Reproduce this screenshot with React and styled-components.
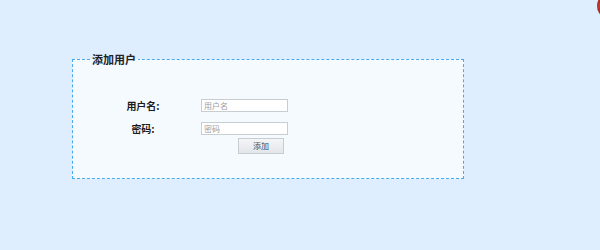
import React from "react";
import styled, { createGlobalStyle } from "styled-components";

const Global = createGlobalStyle`
  html, body { margin: 0; padding: 0; }
  body {
    background: #deeefe;
    width: 600px;
    height: 250px;
    overflow: hidden;
    font-family: "Noto Sans CJK SC", "Noto Sans", sans-serif;
  }
`;

const Page = styled.div`
  position: relative;
  width: 600px;
  height: 250px;
  padding-top: 53px;
  box-sizing: border-box;
`;

const Corner = styled.div`
  position: absolute;
  top: -4px;
  right: -11px;
  width: 14px;
  height: 20px;
  border-radius: 50%;
  background: radial-gradient(circle at 20% 50%, #c23a2e 0%, #a02a20 45%, #6a6a6a 65%);
`;

const Fieldset = styled.fieldset`
  margin: 0 0 0 72px;
  width: 392px;
  height: 126px;
  box-sizing: border-box;
  border: 1px dashed #45aaee;
  background: #f5faff;
  padding: 0;
  min-width: 0;
`;

const Legend = styled.legend`
  margin-left: 17px;
  padding: 0 2px 0 2px;
  font-size: 11px;
  font-weight: bold;
  color: #222;
  line-height: 12px;
`;

const Form = styled.div`
  display: grid;
  grid-template-columns: 80px 90px;
  column-gap: 18px;
  row-gap: 10px;
  align-items: center;
  padding: 34px 0 0 30px;
`;

const Label = styled.label`
  text-align: center;
  font-size: 10px;
  font-weight: bold;
  color: #1c1c1c;
  line-height: 13px;
`;

const Input = styled.input`
  width: 87px;
  height: 13px;
  box-sizing: border-box;
  border: 1px solid #c8cdd2;
  background: #fff;
  padding: 0 2px;
  margin: 0;
  font-family: "Noto Sans CJK SC", sans-serif;
  font-size: 8px;
  outline: none;
  &::placeholder { color: #9a9a9a; }
`;

const ButtonCell = styled.div`
  grid-column: 2;
  display: flex;
  padding-left: 37px;
  margin-top: -7px;
`;

const Button = styled.button`
  width: 46px;
  height: 16px;
  box-sizing: border-box;
  border: 1px solid #c9ccd0;
  background: linear-gradient(#f4f5f7, #e3e6ea);
  color: #3a4c60;
  font-family: "Noto Sans CJK SC", sans-serif;
  font-size: 8px;
  padding: 0;
  line-height: 14px;
`;

export default function App() {
  return (
    <>
      <Global />
      <Page>
        <Corner />
        <Fieldset>
          <Legend>添加用户</Legend>
          <Form>
            <Label>用户名:</Label>
            <Input placeholder="用户名" />
            <Label>密码:</Label>
            <Input placeholder="密码" />
            <ButtonCell>
              <Button>添加</Button>
            </ButtonCell>
          </Form>
        </Fieldset>
      </Page>
    </>
  );
}
